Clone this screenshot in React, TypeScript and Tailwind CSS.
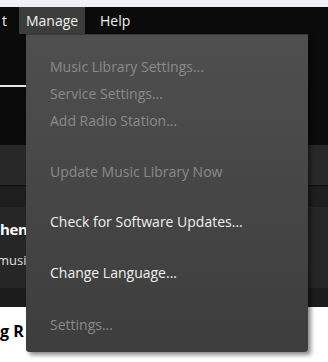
import React from "react";

const font = { fontFamily: '"Open Sans", "Noto Sans", sans-serif' };

function Item({ label, enabled, className = "" }: { label: string; enabled?: boolean; className?: string }) {
  return (
    <div
      className={`h-[27px] leading-[27px] pl-[24px] text-[14px] whitespace-nowrap ${enabled ? "text-[#f0f0f0]" : "text-[#8a8a8a]"} ${className}`}
    >
      {label}
    </div>
  );
}

export default function App() {
  return (
    <div className="relative w-[328px] h-[362px] overflow-hidden bg-white" style={font}>
      <div className="h-[7px] bg-[#f0f0f7]" />
      <div className="h-[27px] bg-[#0b0b0b] flex items-stretch text-[14px] text-[#f0f0f0]">
        <div className="w-[19px] pl-[2px] leading-[27px]">t</div>
        <div className="bg-[#3c3c3c] w-[66px] pl-[7px] leading-[27px]">Manage</div>
        <div className="pl-[15px] leading-[27px]">Help</div>
      </div>
      <div className="h-[111px] bg-[#0b0b0b] pt-[51px]">
        <div className="w-[26px] h-[2px] bg-[#e8e8e8]" />
      </div>
      <div className="h-[41px] bg-[#282828] border-b border-[#0f0f0f]" />
      <div className="h-[21px] bg-[#1e1e1e]" />
      <div className="h-[81px] bg-[#262626] text-white">
        <div className="h-[44px] flex items-center pt-[1px] text-[15px] font-bold whitespace-nowrap tracking-[-0.3px]">hen</div>
        <div className="h-[38px] flex items-start text-[13px] whitespace-nowrap -ml-[3px] text-[#e0e0e0]">music</div>
      </div>
      <div className="h-[19px] bg-[#1c1c1c]" />
      <div className="h-[55px] bg-white pt-[12px] text-[16px] font-bold text-black whitespace-nowrap">g R</div>

      <div className="absolute left-[26px] top-[34px] w-[282px] h-[318px] rounded-b-[3px] border-t border-[#3a3a3a] bg-gradient-to-b from-[#4f4f4f] to-[#3d3d3d] shadow-[3px_3px_4px_rgba(0,0,0,0.45)] pt-[18px]">
        <Item label="Music Library Settings..." />
        <Item label="Service Settings..." />
        <Item label="Add Radio Station..." />
        <Item label="Update Music Library Now" className="mt-[24px]" />
        <Item label="Check for Software Updates..." enabled className="mt-[23px]" />
        <Item label="Change Language..." enabled className="mt-[24px]" />
        <Item label="Settings..." className="mt-[25px]" />
      </div>
    </div>
  );
}
